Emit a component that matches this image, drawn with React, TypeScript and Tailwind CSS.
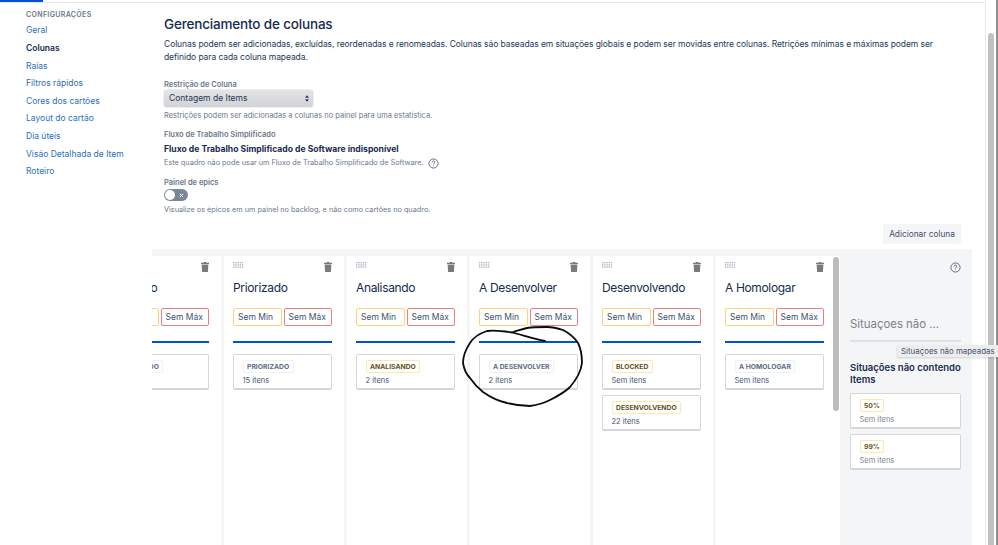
const nav = ['Geral', 'Colunas', 'Raias', 'Filtros rápidos', 'Cores dos cartões', 'Layout do cartão', 'Dia úteis', 'Visão Detalhada de Item', 'Roteiro']

type Status = { label: string; count: string; yellow?: boolean }

const columns: { title: string; statuses: Status[] }[] = [
  { title: 'Refinado', statuses: [{ label: 'REFINADO', count: '3 itens' }] },
  { title: 'Priorizado', statuses: [{ label: 'PRIORIZADO', count: '15 itens' }] },
  { title: 'Analisando', statuses: [{ label: 'ANALISANDO', count: '2 itens', yellow: true }] },
  { title: 'A Desenvolver', statuses: [{ label: 'A DESENVOLVER', count: '2 itens' }] },
  {
    title: 'Desenvolvendo',
    statuses: [
      { label: 'BLOCKED', count: 'Sem itens', yellow: true },
      { label: 'DESENVOLVENDO', count: '22 itens', yellow: true },
    ],
  },
  { title: 'A Homologar', statuses: [{ label: 'A HOMOLOGAR', count: 'Sem itens' }] },
]

function HelpIcon() {
  return (
    <svg viewBox="0 0 12 12" className="h-[11px] w-[11px] text-[#42526e]" fill="none" stroke="currentColor">
      <circle cx="6" cy="6" r="5" strokeWidth="0.9" />
      <path d="M4.5 4.7c0-.9.7-1.4 1.5-1.4s1.5.5 1.5 1.3c0 1.2-1.5 1.2-1.5 2.4" strokeWidth="0.9" />
      <circle cx="6" cy="8.6" r="0.5" fill="currentColor" stroke="none" />
    </svg>
  )
}

function Grip() {
  return (
    <svg viewBox="0 0 11 6" className="h-[6px] w-[11px] fill-[#b3b9c4]">
      {[0, 2.2, 4.4].map((y) =>
        [0, 2.2, 4.4, 6.6, 8.8].map((x) => <rect key={`${x}-${y}`} x={x} y={y} width="1.4" height="1.4" />),
      )}
    </svg>
  )
}

function Trash() {
  return (
    <svg viewBox="0 0 8 10" className="h-[10px] w-[8px] fill-[#7a7a7a]">
      <path d="M2.8 0h2.4l.4.8H8V2H0V.8h2.4zM.6 2.6h6.8L6.9 10H1.1z" />
    </svg>
  )
}

function StatusCard({ status, muted }: { status: Status; muted?: boolean }) {
  return (
    <div className="flex h-[36px] flex-col rounded-[2px] border border-[#d4d6da] border-b-2 bg-white pl-[8.5px] pt-[5px]">
      <span
        className={
          status.yellow
            ? 'self-start rounded-[2px] border border-[#ffe9a8] px-[3.5px] text-[6.8px] leading-[11px] font-bold text-[#65531a]'
            : 'self-start rounded-[2px] border border-[#eef0f3] px-[3.5px] text-[6.8px] leading-[11px] font-bold text-[#5e6c84]'
        }
      >
        {status.label}
      </span>
      <span className={muted ? 'mt-[2px] text-[7.5px] leading-[11px] text-[#7a7f88]' : 'mt-[2px] text-[7.5px] leading-[11px] text-[#42526e]'}>
        {status.count}
      </span>
    </div>
  )
}

function Column({ title, statuses }: { title: string; statuses: Status[] }) {
  return (
    <div className="flex w-[120px] shrink-0 flex-col bg-white pl-[9px] pr-[12px]">
      <div className="flex h-[17px] items-start justify-between pt-[6px]">
        <Grip />
        <Trash />
      </div>
      <h3 className="mt-[6px] h-[18px] truncate text-[12px] leading-[18px] font-normal tracking-[-0.35px] text-[#172b4d]">{title}</h3>
      <div className="mt-[11px] flex gap-[2px]">
        <div className="h-[18px] w-[49px] rounded-[2px] border border-[#ffd27a] pl-[4px] text-[8.5px] leading-[16px] text-[#42526e]">Sem Min</div>
        <div className="h-[18px] w-[49px] rounded-[2px] border border-[#e98080] pl-[4px] text-[8.5px] leading-[16px] text-[#42526e]">Sem Máx</div>
      </div>
      <div className="mt-[15px] h-[2px] bg-[#0052cc]" />
      <div className="mt-[11px] flex flex-col gap-[5px]">
        {statuses.map((s) => (
          <StatusCard key={s.label} status={s} />
        ))}
      </div>
    </div>
  )
}

export default function App() {
  return (
    <div className="relative flex h-[545px] w-[998px] overflow-hidden bg-white font-['Inter',sans-serif] text-[#172b4d]">
      <div className="flex w-[985px] shrink-0 flex-col">
        <div className="h-[3px] shrink-0 border-b border-[#e5e7eb]">
          <div className="h-[2px] w-[43px] bg-[#0052cc]" />
        </div>
        <div className="flex min-h-0 flex-1">
          <nav className="w-[152px] shrink-0 pl-[26px] pt-[7px]">
            <div className="text-[7px] leading-[9px] font-semibold tracking-[0.35px] text-[#6b778c]">CONFIGURAÇÕES</div>
            <ul className="mt-[3.4px]">
              {nav.map((item) => (
                <li
                  key={item}
                  className={
                    item === 'Colunas'
                      ? 'h-[17.6px] text-[8.5px] leading-[17.6px] font-semibold text-[#172b4d]'
                      : 'h-[17.6px] text-[8.5px] leading-[17.6px] text-[#2a6ebb]'
                  }
                >
                  {item}
                </li>
              ))}
            </ul>
          </nav>
          <main className="flex min-w-0 flex-1 flex-col">
            <div className="pl-[12px] pr-[24px]">
              <h1 className="mt-[11px] text-[13.5px] leading-[20px] font-medium tracking-[-0.17px] text-[#172b4d]">Gerenciamento de colunas</h1>
              <p className="mt-[4px] w-[790px] text-[8.5px] leading-[12.5px] tracking-[-0.08px] text-[#253858]">
                Colunas podem ser adicionadas, excluídas, reordenadas e renomeadas. Colunas são baseadas em situações globais e podem ser movidas entre colunas. Retrições mínimas e máximas podem ser definido para cada coluna mapeada.
              </p>
              <div className="mt-[17px] text-[7.5px] leading-[10px] font-semibold text-[#6b778c]">Restrição de Coluna</div>
              <div className="flex h-[17px] w-[149px] items-center justify-between rounded-[3px] bg-gradient-to-b from-[#e4e4e6] to-[#d2d3d6] pl-[5px] pr-[4px] text-[8.5px] text-[#253858] shadow-[0_0_0_1px_#eceded]">
                Contagem de Items
                <svg viewBox="0 0 6 10" className="h-[7px] w-[4px] fill-[#253858]">
                  <path d="M3 0l3 4H0zM3 10L0 6h6z" />
                </svg>
              </div>
              <p className="mt-[4px] text-[7.5px] leading-[10px] text-[#6b778c]">Restrições podem ser adicionadas a colunas no painel para uma estatística.</p>
              <div className="mt-[9px] text-[7.5px] leading-[10px] font-semibold text-[#6b778c]">Fluxo de Trabalho Simplificado</div>
              <div className="mt-[4px] text-[8.6px] leading-[10px] font-bold text-[#172b4d]">Fluxo de Trabalho Simplificado de Software indisponível</div>
              <p className="mt-[4px] flex h-[10px] items-center gap-[4px] text-[7.3px] leading-[10px] text-[#6b778c]">
                Este quadro não pode usar um Fluxo de Trabalho Simplificado de Software. <HelpIcon />
              </p>
              <div className="mt-[9.5px] text-[7.5px] leading-[10px] font-semibold text-[#6b778c]">Painel de epics</div>
              <div className="mt-[1.5px] flex h-[12px] w-[24px] items-center justify-between rounded-full bg-[#7a869a] pl-[1px] pr-[4px]">
                <span className="h-[10px] w-[10px] rounded-full bg-white" />
                <svg viewBox="0 0 6 6" className="h-[5px] w-[5px] stroke-white" strokeWidth="1.2">
                  <path d="M1 1l4 4M5 1L1 5" />
                </svg>
              </div>
              <p className="mt-[4px] text-[7.3px] leading-[10px] text-[#6b778c]">Visualize os épicos em um painel no backlog, e não como cartões no quadro.</p>
              <div className="mt-[9px] flex justify-end">
                <button className="h-[20px] w-[78px] rounded-[2px] bg-[#f4f5f7] text-[8.3px] text-[#42526e]">Adicionar coluna</button>
              </div>
            </div>
            <section className="mt-[5px] flex min-h-0 w-[820px] flex-1 bg-[#f4f5f7] pt-[7px]">
              <div className="relative flex w-[688px] shrink-0 justify-end gap-[3px] overflow-hidden pr-[4px]">
                {columns.map((c) => (
                  <Column key={c.title} title={c.title} statuses={c.statuses} />
                ))}
                <div className="absolute right-0 top-0 h-full w-[8px] bg-white">
                  <div className="ml-[1px] mt-[1px] h-[154px] w-[6px] rounded-full bg-[#bcbcbc]" />
                </div>
              </div>
              <aside className="flex min-w-0 flex-1 flex-col pl-[10px] pr-[11px] pt-[6px]">
                <div className="flex justify-end">
                  <HelpIcon />
                </div>
                <h3 className="mt-[42px] text-[11.4px] leading-[18px] text-[#7a7f88]">Situaçoes não ...</h3>
                <div className="mt-[7px] h-[2px] bg-[#dfe1e6]" />
                <h4 className="mt-[20px] text-[9.5px] leading-[12px] font-semibold text-[#172b4d]">Situações não contendo Items</h4>
                <div className="mt-[7px] flex flex-col gap-[5px]">
                  <StatusCard status={{ label: '50%', count: 'Sem itens', yellow: true }} muted />
                  <StatusCard status={{ label: '99%', count: 'Sem itens', yellow: true }} muted />
                </div>
              </aside>
            </section>
          </main>
        </div>
      </div>
      <div className="flex flex-1 border-l border-[#e8e8e8] bg-white pl-[2px] pt-[33px]">
        <div className="h-full w-[6px] rounded-t-full bg-[#c1c1c1]" />
        <div className="-mt-[33px] ml-[2px] h-[545px] w-[2px] bg-[#8f8f8f]" />
      </div>
      <div className="absolute left-[897px] top-[345px] h-[12px] w-[101px] bg-[#ededed] pl-[4px] text-[7.9px] leading-[12px] text-[#42526e] shadow-[0_1px_2px_rgba(0,0,0,0.15)]">
        Situaçoes não mapeadas
      </div>
      <svg className="pointer-events-none absolute left-0 top-0" width="998" height="545" fill="none">
        <path
          d="M545 341 C532 338 522 335 512 332.5 C503 331 494 330 487 331 C478 334 473 338 470 343 C466 349 463 356 463 363 C464 369 466 374 470 378 C474 384 478 388 483 392 C490 397 498 401 507 403 C515 405 523 406 530 406 C537 405 544 403 550 400 C558 396 565 392 570 387 C576 380 581 371 582 363 C582 355 581 349 578 343 C574 337 569 333 563 330 C557 328 552 327 547 327 C540 327 533 327 527 328 C522 329 517 331 513 332"
          stroke="#0b0b0b"
          strokeWidth="1.8"
          strokeLinecap="round"
        />
      </svg>
    </div>
  )
}
